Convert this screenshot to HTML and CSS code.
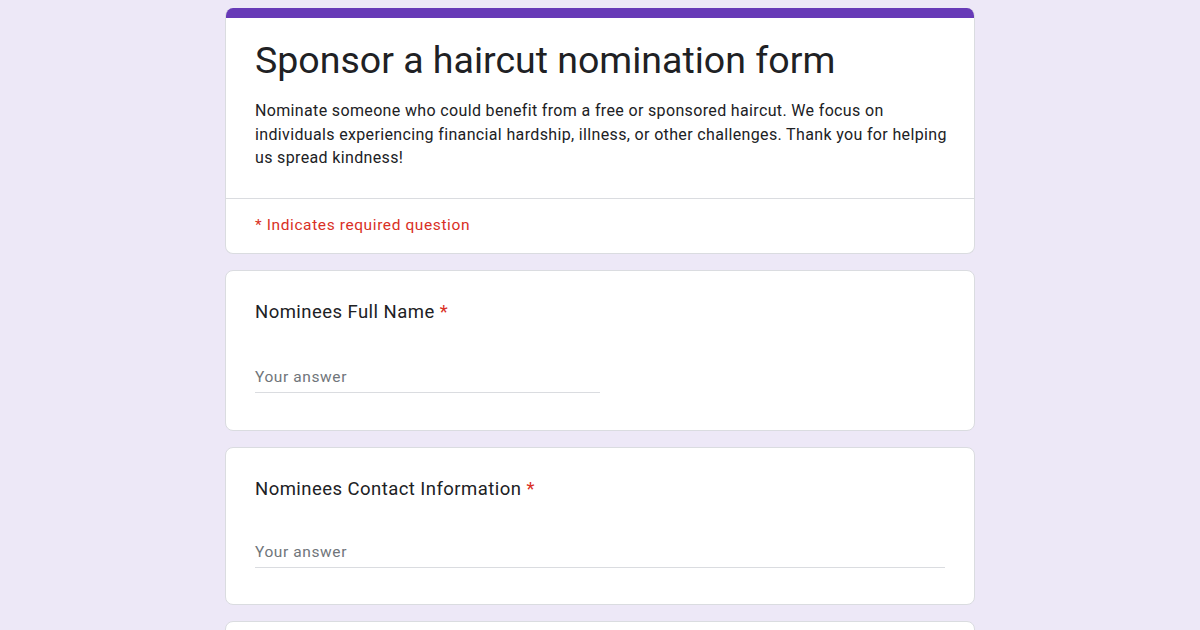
FILE: index.html
```html
<!DOCTYPE html>
<html lang="en">
<head>
<meta charset="utf-8">
<title>Sponsor a haircut nomination form</title>
<link rel="stylesheet" href="styles.css">
</head>
<body>
<main class="form">
  <section class="card header-card">
    <div class="accent"></div>
    <div class="header-body">
      <h1 class="form-title">Sponsor a haircut nomination form</h1>
      <p class="form-desc">Nominate someone who could benefit from a free or sponsored haircut. We focus on individuals experiencing financial hardship, illness, or other challenges. Thank you for helping us spread kindness!</p>
    </div>
    <div class="required-note">* Indicates required question</div>
  </section>

  <section class="card question question-a">
    <div class="q-title">Nominees Full Name <span class="star">*</span></div>
    <div class="answer answer-half">Your answer</div>
  </section>

  <section class="card question question-b">
    <div class="q-title">Nominees Contact Information <span class="star">*</span></div>
    <div class="answer answer-full">Your answer</div>
  </section>

  <section class="card question question-c"></section>
</main>
</body>
</html>
```
FILE: styles.css
```css
html, body {
  margin: 0;
  padding: 0;
}
body {
  background: #ede8f7;
  font-family: Roboto, "Liberation Sans", Arial, sans-serif;
  color: #202124;
  height: 630px;
  overflow: hidden;
}
.form {
  width: 750px;
  margin: 0 auto;
  padding-top: 8px;
  display: flex;
  flex-direction: column;
  gap: 16px;
}
.card {
  background: #fff;
  border: 1px solid #dadce0;
  border-radius: 8px;
  box-sizing: border-box;
  overflow: hidden;
  flex-shrink: 0;
}
.header-card {
  border-top: none;
}
.accent {
  height: 10px;
  background: #673ab7;
}
.header-body {
  padding: 19px 24px 28px 29px;
  border-bottom: 1px solid #dadce0;
}
.form-title {
  margin: 0;
  font-family: Roboto, "Open Sans", sans-serif;
  font-weight: 400;
  font-size: 37.5px;
  line-height: 46px;
  color: #202124;
}
.form-desc {
  margin: 16px 0 0 0;
  font-size: 16px;
  line-height: 23.5px;
  letter-spacing: 0.35px;
  color: #202124;
}
.required-note {
  padding: 15px 29px 17px 29px;
  color: #d93025;
  font-size: 15.5px;
  line-height: 22px;
  letter-spacing: 0.6px;
}
.question {
  padding: 29px 29px 37px 29px;
}
.q-title {
  font-size: 18.5px;
  line-height: 24px;
  letter-spacing: 0.45px;
  color: #202124;
}
.star {
  color: #d93025;
}
.answer {
  margin-top: 42px;
  font-size: 15.5px;
  line-height: 22px;
  letter-spacing: 0.6px;
  color: #70757a;
  border-bottom: 1px solid #dadce0;
  padding-bottom: 4px;
}
.answer-half {
  width: 50%;
}
.question-b {
  padding-top: 29px;
  padding-bottom: 36px;
}
.question-b .answer {
  margin-top: 40px;
}
.question-c {
  min-height: 60px;
}
```
